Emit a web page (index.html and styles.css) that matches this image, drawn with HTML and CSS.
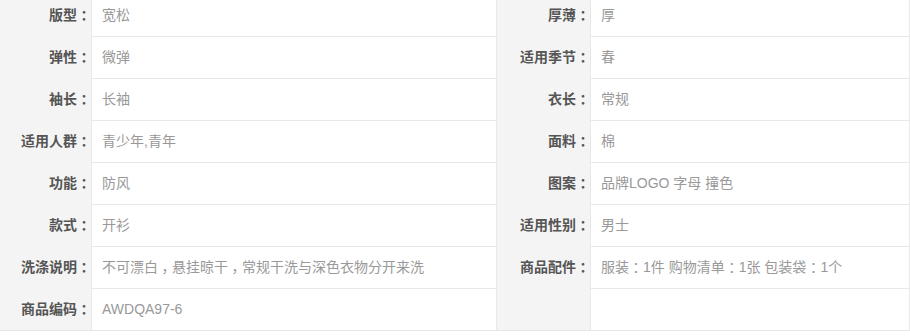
FILE: index.html
```html
<!DOCTYPE html>
<html lang="zh-CN">
<head>
<meta charset="utf-8">
<title>商品参数</title>
<link rel="stylesheet" href="styles.css">
</head>
<body>
<div class="params">
  <div class="lbl">版型<span class="p">：</span></div><div class="val">宽松</div>
  <div class="lbl lbl-r">厚薄<span class="p">：</span></div><div class="val val-r">厚</div>

  <div class="lbl">弹性<span class="p">：</span></div><div class="val">微弹</div>
  <div class="lbl lbl-r">适用季节<span class="p">：</span></div><div class="val val-r">春</div>

  <div class="lbl">袖长<span class="p">：</span></div><div class="val">长袖</div>
  <div class="lbl lbl-r">衣长<span class="p">：</span></div><div class="val val-r">常规</div>

  <div class="lbl">适用人群<span class="p">：</span></div><div class="val">青少年,青年</div>
  <div class="lbl lbl-r">面料<span class="p">：</span></div><div class="val val-r">棉</div>

  <div class="lbl">功能<span class="p">：</span></div><div class="val">防风</div>
  <div class="lbl lbl-r">图案<span class="p">：</span></div><div class="val val-r">品牌LOGO 字母 撞色</div>

  <div class="lbl">款式<span class="p">：</span></div><div class="val">开衫</div>
  <div class="lbl lbl-r">适用性别<span class="p">：</span></div><div class="val val-r">男士</div>

  <div class="lbl">洗涤说明<span class="p">：</span></div><div class="val">不可漂白<span class="p">，</span>悬挂晾干<span class="p">，</span>常规干洗与深色衣物分开来洗</div>
  <div class="lbl lbl-r">商品配件<span class="p">：</span></div><div class="val val-r">服装<span class="p">：</span>1件 购物清单<span class="p">：</span>1张 包装袋<span class="p">：</span>1个</div>

  <div class="lbl last">商品编码<span class="p">：</span></div><div class="val">AWDQA97-6</div>
  <div class="lbl lbl-r last"></div><div class="val val-r"></div>
</div>
</body>
</html>
```

FILE: styles.css
```css
html, body {
  margin: 0;
  padding: 0;
  background: #ffffff;
}

body {
  font-family: "Liberation Sans", "Noto Sans CJK SC", sans-serif;
  font-size: 14px;
  overflow: hidden;
}

.params {
  display: grid;
  grid-template-columns: 93px 405px 94px 320px;
  grid-auto-rows: 42px;
  margin-top: -5px;
  margin-left: -2px;
  width: 912px;
}

/* half-width punctuation glyph, centred inside a full em */
.p {
  font-feature-settings: "halt";
  padding: 0 3.5px;
}

.lbl {
  background: #f4f4f4;
  color: #555555;
  font-weight: bold;
  text-align: right;
  line-height: 40px;
  box-sizing: border-box;
  white-space: nowrap;
}

.lbl-r {
  border-left: 1px solid #e8e8e8;
}

.lbl.last {
  border-bottom: 1px solid #e8e8e8;
}

.val {
  background: #ffffff;
  color: #999999;
  border-left: 1px solid #e8e8e8;
  border-bottom: 1px solid #e8e8e8;
  box-sizing: border-box;
  padding-left: 10px;
  line-height: 40px;
  white-space: nowrap;
}

.val-r {
  border-right: 1px solid #e8e8e8;
}
```
